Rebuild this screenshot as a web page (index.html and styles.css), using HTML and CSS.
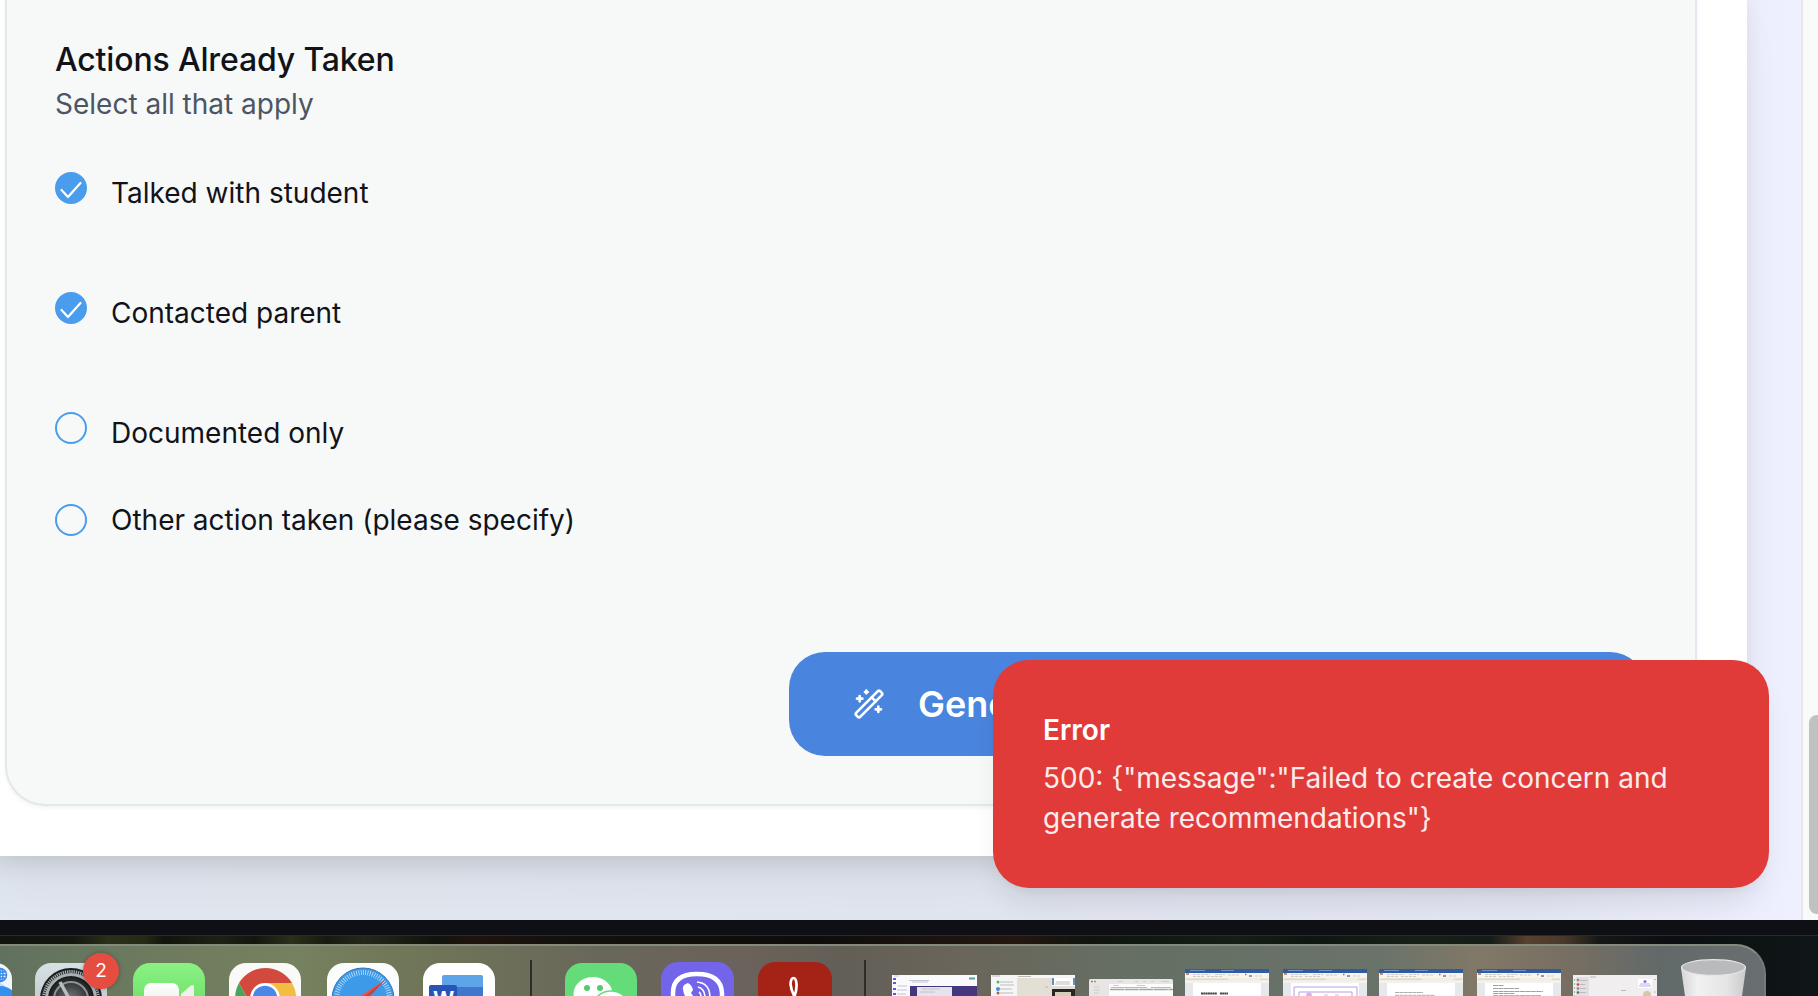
FILE: index.html
```html
<!DOCTYPE html>
<html lang="en">
<head>
<meta charset="utf-8">
<title>Actions Already Taken</title>
<link rel="stylesheet" href="styles.css">
</head>
<body>
<div class="screen">
  <div class="browser">
    <main class="page">
      <div class="panel">
        <section class="card">
          <h2 class="heading">Actions Already Taken</h2>
          <p class="hint">Select all that apply</p>
          <div class="options">
            <label class="option"><span class="check checked"><svg viewBox="0 0 32 32"><path d="M6.5 18l6.500 7L25.500 11"/></svg></span><span class="option-text">Talked with student</span></label>
            <label class="option"><span class="check checked"><svg viewBox="0 0 32 32"><path d="M6.5 18l6.500 7L25.500 11"/></svg></span><span class="option-text">Contacted parent</span></label>
            <label class="option"><span class="check"></span><span class="option-text">Documented only</span></label>
            <label class="option option-other"><span class="check"></span><span class="option-text">Other action taken (please specify)</span></label>
          </div>
          <div class="actions">
            <button class="generate">
              <svg class="wand" viewBox="0 0 24 24"><path d="m21.640 3.640-1.280-1.280a1.210 1.210 0 0 0-1.720 0L2.360 18.640a1.210 1.210 0 0 0 0 1.720l1.280 1.280a1.200 1.200 0 0 0 1.720 0L21.640 5.360a1.200 1.200 0 0 0 0-1.720"/><path d="m14 7 3 3M5 6v4M19 14v4M10 2v2M7 8H3M21 16h-4M11 3H9"/></svg>
              <span>Generate Recommendations</span>
            </button>
          </div>
        </section>
      </div>
    </main>
    <div class="scrollbar"><div class="thumb"></div></div>
    <div class="toast">
      <div class="toast-title">Error</div>
      <div class="toast-text">500: {"message":"Failed to create concern and generate recommendations"}</div>
    </div>
  </div>
  <div class="bezel"></div>
  <div class="wallpaper">
    <div class="dock">
      <svg class="i-app" width="12" height="33" viewBox="0 0 12 33"><path d="M-60 0H-4A16 16 0 0 1 12 16V33H-60Z" fill="#f2f5f9"/><path d="M-10 16Q6 19 12 33H-10Z" fill="#c9dcf5"/><circle cx="0" cy="42" r="19" fill="#3390ee"/><g fill="none" stroke="#3688e8" stroke-width="1.500"><circle cx="0" cy="12" r="6.500"/><ellipse cx="0" cy="12" rx="3" ry="6.500"/><path d="M0 5v14M-6 12H6M-5 9H5M-5 15H5"/></g></svg>
      <div class="settings i-app">
        <svg width="72" height="33" viewBox="0 0 72 33"><defs><linearGradient id="sg" x2="0" y2="1"><stop stop-color="#d7e0e5"/><stop offset="1" stop-color="#b2bbc0"/></linearGradient><radialGradient id="sc"><stop stop-color="#777"/><stop offset="1" stop-color="#343637"/></radialGradient></defs><rect width="72" height="72" rx="16" fill="url(#sg)"/><circle cx="36" cy="36" r="31" fill="#1b1e1f"/><circle cx="36" cy="36" r="27.500" fill="none" stroke="#a5acae" stroke-width="3" stroke-dasharray="1.300 .9"/><circle cx="36" cy="36" r="24.500" fill="none" stroke="#a9b0b2" stroke-width="3"/><circle cx="36" cy="36" r="21" fill="#252829"/><circle cx="36" cy="36" r="17" fill="url(#sc)" stroke="#8c9395" stroke-width="2"/><path d="M36 39L25 19M36 39H58" stroke="#b6bdbf" stroke-width="3.500"/></svg>
        <span class="badge">2</span>
      </div>
      <svg class="i-app" width="72" height="33" viewBox="0 0 72 33"><defs><linearGradient id="fg" x2="0" y2="1"><stop stop-color="#8af283"/><stop offset="1" stop-color="#5bd45a"/></linearGradient><linearGradient id="fw" x2="0" y2="1"><stop stop-color="#fff"/><stop offset="1" stop-color="#dfe6dd"/></linearGradient></defs><rect width="72" height="72" rx="17" fill="url(#fg)"/><rect x="11" y="20" width="35" height="33" rx="7" fill="url(#fw)"/><path d="M48 31L58 22.500Q61 21 61 24V48H48Z" fill="#eef2ed"/></svg>
      <svg class="i-app" width="72" height="33" viewBox="0 0 72 33"><rect width="72" height="72" rx="17" fill="#f9f9f7"/><path d="M36 20H63A31 31 0 0 1 60 56L36 60Z" fill="#f2be42"/><path d="M10 20L24 45L36 66A31 31 0 0 1 10 20" fill="#4ba45b"/><path d="M10 20A31 31 0 0 1 63 20H36L22 36L19 36Z" fill="#d24a3d"/><circle cx="36" cy="35" r="15" fill="#fff"/><circle cx="36" cy="35" r="12.300" fill="#4b87e9"/></svg>
      <svg class="i-app" width="72" height="33" viewBox="0 0 72 33"><rect width="72" height="72" rx="17" fill="#fbfcfc"/><circle cx="36" cy="36" r="31" fill="#3d9ae9" stroke="#3675af" stroke-width="1"/><circle cx="36" cy="36" r="26.500" fill="none" stroke="#d3eafa" stroke-width="5" stroke-dasharray=".7 1.600"/><path d="M58 17L33 33H42Z" fill="#e85349"/><path d="M58 17L38 33H43Z" fill="#bd4544"/></svg>
      <svg class="i-app" width="72" height="33" viewBox="0 0 72 33"><rect width="72" height="72" rx="17" fill="#fff"/><path d="M19 25V14Q19 12 21 12H58Q60 12 60 14V25Z" fill="#5ea4e9"/><path d="M19 24H60V33H19Z" fill="#3e77cd"/><rect x="6" y="22" width="28" height="28" rx="2" fill="#2855b5"/><text x="10.500" y="43" class="word-letter">W</text></svg>
      <i class="divider"></i>
      <svg class="i-app" width="72" height="33" viewBox="0 0 72 33"><rect width="72" height="72" rx="17" fill="#64dc7a"/><ellipse cx="28" cy="31" rx="19.500" ry="17" fill="#fff"/><circle cx="22" cy="25" r="3" fill="#57c96d"/><circle cx="35" cy="25" r="3" fill="#57c96d"/><ellipse cx="46" cy="42" rx="17" ry="14" fill="#fff" stroke="#64dc7a" stroke-width="1.500"/></svg>
      <svg class="i-app" width="73" height="34" viewBox="0 0 73 34"><rect width="73" height="73" rx="17" fill="#7265e9"/><path d="M12 40V31Q12 12 36 12T61 31V40" fill="none" stroke="#fff" stroke-width="4.500"/><path d="M22 27Q21 23 27 21Q31 23 32 28L30 31Q33 35 36 39L26 38Q22 31 22 27" fill="#fff"/><path d="M36 20Q49 21 49 36M37 25Q44 27 44 36M38 30Q40 31 40 35" fill="none" stroke="#fff" stroke-width="1.600"/></svg>
      <svg class="i-app" width="74" height="34" viewBox="0 0 74 34"><rect width="74" height="74" rx="17" fill="#a42316"/><path d="M34 40Q39 30 38.500 22Q38 16 35.500 16T32.500 22Q33 29 38 37" fill="none" stroke="#fff" stroke-width="2.700"/></svg>
      <i class="divider"></i>
      <svg class="i-thumb" width="85" height="21" viewBox="0 0 85 21"><path d="M0 0H85V21H0Z" fill="#fafafc"/><path d="M18 11H85V21H18Z" fill="#46377d"/><path d="M25 12H60V21H25Z" fill="#e5e3ee"/><path d="M2 1h5M17 5.500h20M20 7h16M30 14h18M28 17h15M6 11h9M5 15h10M5 19h9" stroke="#bfc4ce" stroke-width="1"/><path d="M77 3.500h6" stroke="#4ba79d" stroke-width="2"/><path d="M1 4h3M1 8h3M1 14h3M1 19h3" stroke="#6554dc" stroke-width="2"/></svg>
      <svg class="i-thumb" width="84" height="21" viewBox="0 0 84 21"><path d="M0 0H84V21H0Z" fill="#f6f6f6"/><path d="M26 3H61V21H26Z" fill="#e4dfd4"/><path d="M61 3H84V11H61Z" fill="#fff"/><path d="M62 3V10M83 3V10" stroke="#386ba1" stroke-width="1.500"/><path d="M61 11H84V14H61Z" fill="#e4dfd4"/><path d="M61 14H84V21H61Z" fill="#252726"/><path d="M64 17H80V21H64Z" fill="#d8cdbb"/><path d="M1 1h8M27 1.500h13M65 7h14M64 9h15M9 7h13M9 10h14M9 14h12M9 18h13M54 12h3" stroke="#bbb" stroke-width="1.200"/><circle cx="7" cy="14" r="2" fill="#438ee5"/><circle cx="7" cy="7" r="1.500" fill="#5ab958"/><circle cx="7" cy="18" r="1.500" fill="#b45d4b"/></svg>
      <svg class="i-thumb" width="84" height="17" viewBox="0 0 84 17"><rect width="84" height="30" rx="1.500" fill="#e7e6e5"/><path d="M20 5H84V17H20Z" fill="#fcfcfc"/><path d="M29 2.500h5M46 2.500h3M54 2.500h3M62 2.500h3M72 2.500h8M24 6.500h6M48 6.500h8M5 8h5M5 11h6M5 14h5" stroke="#ccc"/><path d="M22 8.500H58M62 8.500H82" stroke="#aaa" stroke-width=".8"/><path d="M21 10.500H84" stroke="#a5a5a5" stroke-width="1.300" stroke-dasharray="14 .6"/><path d="M2 2.500h2" stroke="#df665f" stroke-width="1.500"/><path d="M5 2.500h2" stroke="#79b557" stroke-width="1.500"/></svg>
      <svg class="i-thumb" width="84" height="27" viewBox="0 0 84 27"><g id="doc"><path d="M0 0H84V27H0Z" fill="#e6e8ec"/><path d="M0 0H84V4H0Z" fill="#315a9f"/><path d="M0 4H84V9H0Z" fill="#f6f5f5"/><path d="M0 9H84V11.500H0Z" fill="#f8eed4"/><path d="M0 11.500H84V14H0Z" fill="#f2f2f3"/><path d="M8 14H76V27H8Z" fill="#fff"/><path d="M5 1.500h15M36 1.500h13" stroke="#829fce" stroke-width=".8"/><path d="M8 5.500h17M30 5.500h10M8 7.500h11M22 7.500h15M43 6h12M70 7h8" stroke="#cbced3" stroke-dasharray="3 1"/><path d="M1 10.200h42M75 10.200h8" stroke="#d3c8aa" stroke-width=".8"/><path d="M1 5h3M60 5.500h1.500" stroke="#b3695d" stroke-width="1.500"/><path d="M64 7h3" stroke="#7a9bcc" stroke-width="2"/></g><path d="M16 24.500h16M35 24.500h8" stroke="#444" stroke-width="1.800" stroke-dasharray="2 .3"/></svg>
      <svg class="i-thumb" width="84" height="27" viewBox="0 0 84 27"><use href="#doc"/><path d="M11 27V18H74V27M16 27V23H69V27" fill="none" stroke="#bb9edc"/><circle cx="26" cy="26" r="2.800" fill="#ceb3ef"/><path d="M41 26h4M52 26h4" stroke="#a8cfe2"/></svg>
      <svg class="i-thumb" width="84" height="27" viewBox="0 0 84 27"><use href="#doc"/><path d="M16 23.500h28M16 26.300h40" stroke="#999" stroke-width=".8" stroke-dasharray="4 .4"/></svg>
      <svg class="i-thumb" width="84" height="27" viewBox="0 0 84 27"><use href="#doc"/><path d="M16 16.500h11M16 19.500h26M16 22.500h50M16 24.500h22M16 26.700h48" stroke="#888" stroke-width=".8" stroke-dasharray="5 .4"/></svg>
      <svg class="i-thumb" width="84" height="21" viewBox="0 0 84 21"><path d="M0 0H84V21H0Z" fill="#f0eeee"/><path d="M3 2H16V21H3Z" fill="#e1dfe1"/><path d="M65 4H79V13H65Z" fill="#fff"/><circle cx="72" cy="6.500" r="1.500" fill="#8c72df"/><path d="M67 9h10M66 11h12" stroke="#ad9de1" stroke-width=".8"/><circle cx="74" cy="20" r="4" fill="#d3c8a9"/><circle cx="5" cy="9.500" r="1.300" fill="#f33"/><circle cx="5" cy="5" r="1.300" fill="#8a8790"/><circle cx="5" cy="13.500" r="1.300" fill="#888"/><circle cx="5" cy="17.500" r="1.300" fill="#666"/><path d="M7 5.500h7M7 9.500h5M7 13.500h6M7 17.500h6M17 2h6M48 15.500h5M81 4.500h2M81 17h2" stroke="#bbb"/><path d="M1.500 4v17" stroke="#8cc3a0" stroke-width="1.200" stroke-dasharray="2 2"/></svg>
      <svg class="i-trash" width="66" height="37" viewBox="0 0 66 37"><defs><linearGradient id="tg"><stop stop-color="#d6d6d7"/><stop offset=".25" stop-color="#f1f1f1"/><stop offset=".7" stop-color="#e5e5e6"/><stop offset="1" stop-color="#c9cacb"/></linearGradient></defs><path d="M0 9L4 37H61L65 9Z" fill="url(#tg)"/><ellipse cx="32.500" cy="8.500" rx="32" ry="7.800" fill="#b9babb" stroke="#e6e7e7" stroke-width="1.200"/></svg>
    </div>
  </div>
</div>
</body>
</html>
```

FILE: styles.css
```css
* { box-sizing: border-box; }
body { margin: 0; font-family: Inter, "Liberation Sans", sans-serif; color: #111318; }
.screen { width: 1818px; height: 996px; overflow: hidden; display: flex; flex-direction: column; }
.browser { position: relative; display: flex; height: 920px; flex: none; overflow: hidden; }
.page { flex: none; width: 1801px; overflow: hidden; background: linear-gradient(90deg, #e1e7f0 0, #e1e5ef 50%, #e4e7f4 85%, #eff0ff 100%); }
.panel { width: 1767px; height: 876px; margin: -20px 0 0 -20px; padding: 0 50px 50px 25px; background: #fff; box-shadow: 0 36px 50px -10px rgba(0, 0, 0, .05), 0 16px 24px -10px rgba(0, 0, 0, .09), 0 0 30px rgba(0, 0, 0, .04); }
.card { height: 826px; padding: 58px 49px 48px 48px; border: 2px solid #e2e8ee; border-top: 0; border-radius: 0 0 40px 40px; background: #f7f9f9; box-shadow: 0 2px 4px rgba(0, 0, 0, .05); }
.heading { margin: 0; font-size: 32px; line-height: 44px; font-weight: 500; letter-spacing: -.16px; }
.hint { margin: 2px 0 0; font-size: 28px; line-height: 40px; color: #4b5563; }
.options { margin-top: 48px; }
.option { display: flex; gap: 24px; height: 120px; }
.option-other { height: 148px; margin-top: -28px; }
.check { flex: none; width: 32px; height: 32px; border: 2px solid #4a9dec; border-radius: 50%; }
.check svg { display: block; width: 32px; height: 32px; margin: -2px; fill: none; stroke: #fff; stroke-width: 2.200; stroke-linecap: round; stroke-linejoin: round; }
.checked { background: #4a9dec; }
.option-text { padding-top: 1px; font-size: 28px; line-height: 40px; }
.option-other .option-text { padding-top: 0; margin-top: -4px; }
.actions { display: flex; justify-content: flex-end; }
.generate { display: flex; align-items: center; gap: 33px; width: 857px; height: 104px; padding: 0 0 0 64px; border: 0; border-radius: 36px; background: #4984de; color: #fff; font: 600 36px/52px Inter, sans-serif; white-space: nowrap; }
.wand { width: 32px; height: 32px; fill: none; stroke: currentColor; stroke-width: 2; stroke-linecap: round; stroke-linejoin: round; }
.scrollbar { width: 17px; padding: 715px 0 6px 6px; border-left: 2px solid #e7e7e7; background: #fafafa; }
.thumb { width: 16px; height: 199px; border-radius: 8px; background: #c1c1c1; }
.toast { position: absolute; left: 993px; top: 660px; width: 776px; height: 228px; padding: 50px; border-radius: 36px; background: #e13b39; color: #fff; box-shadow: 0 20px 30px -6px rgba(0, 0, 0, .08), 0 8px 12px -8px rgba(0, 0, 0, .08); font-size: 28px; line-height: 40px; }
.toast-title { font-weight: 600; }
.toast-text { margin-top: 8px; opacity: .9; }
.bezel { flex: none; height: 16px; background: #0f1015; border-bottom: 1px solid #282a2e; }
.wallpaper { flex: none; height: 60px; padding-top: 8px; background: linear-gradient(90deg, #0f150d 0, #12170f 4%, #2a3019 6%, #242a17 8%, #10150d 9%, #1c2213 12%, #12160f 14%, #2a301a 16%, #161b10 18%, #22291a 20%, #10140d 24%, #20140d 26%, #15110d 30%, #0e0d0b 45%, #1d140f 52%, #24170f 56%, #0f140f 60%, #161e15 68%, #0f1611 72%, #172018 78%, #161c18 82%, #57412f 84%, #4a392b 86%, #151715 88%, #0b0f11 92%, #101617 100%); }
.dock { display: grid; grid-template-columns: 35px 98px 96px 98px 96px 107px 35px 96px 97px 106px 28px 99px 98px 96px 98px 96px 98px 96px 108px 85px; align-items: end; width: 1766px; height: 52px; border-top: 2px solid #858b7c; border-right: 2px solid #737a7b; border-radius: 0 30px 0 0; background: linear-gradient(90deg, #61715f 0, #6c7a5e 8%, #76815f 17%, #717858 22%, #69675a 34%, #6b625b 42%, #625f57 48%, #6a655a 54%, #657064 65%, #69736a 78%, #827867 84%, #776e62 89%, #626a69 94%, #686f70 100%); }
.dock > *, .settings > svg { display: block; }
.settings { position: relative; width: 72px; height: 33px; }
.badge { position: absolute; left: 48px; top: -10px; width: 36px; height: 36px; border-radius: 50%; background: #e54d41; color: #fff; font-size: 19px; line-height: 36px; text-align: center; box-shadow: 0 0 4px rgba(0, 0, 0, .3); }
.divider { width: 2px; height: 36px; background: #302c25; }
.word-letter { fill: #fff; font: 700 21px "Open Sans", sans-serif; }
```
